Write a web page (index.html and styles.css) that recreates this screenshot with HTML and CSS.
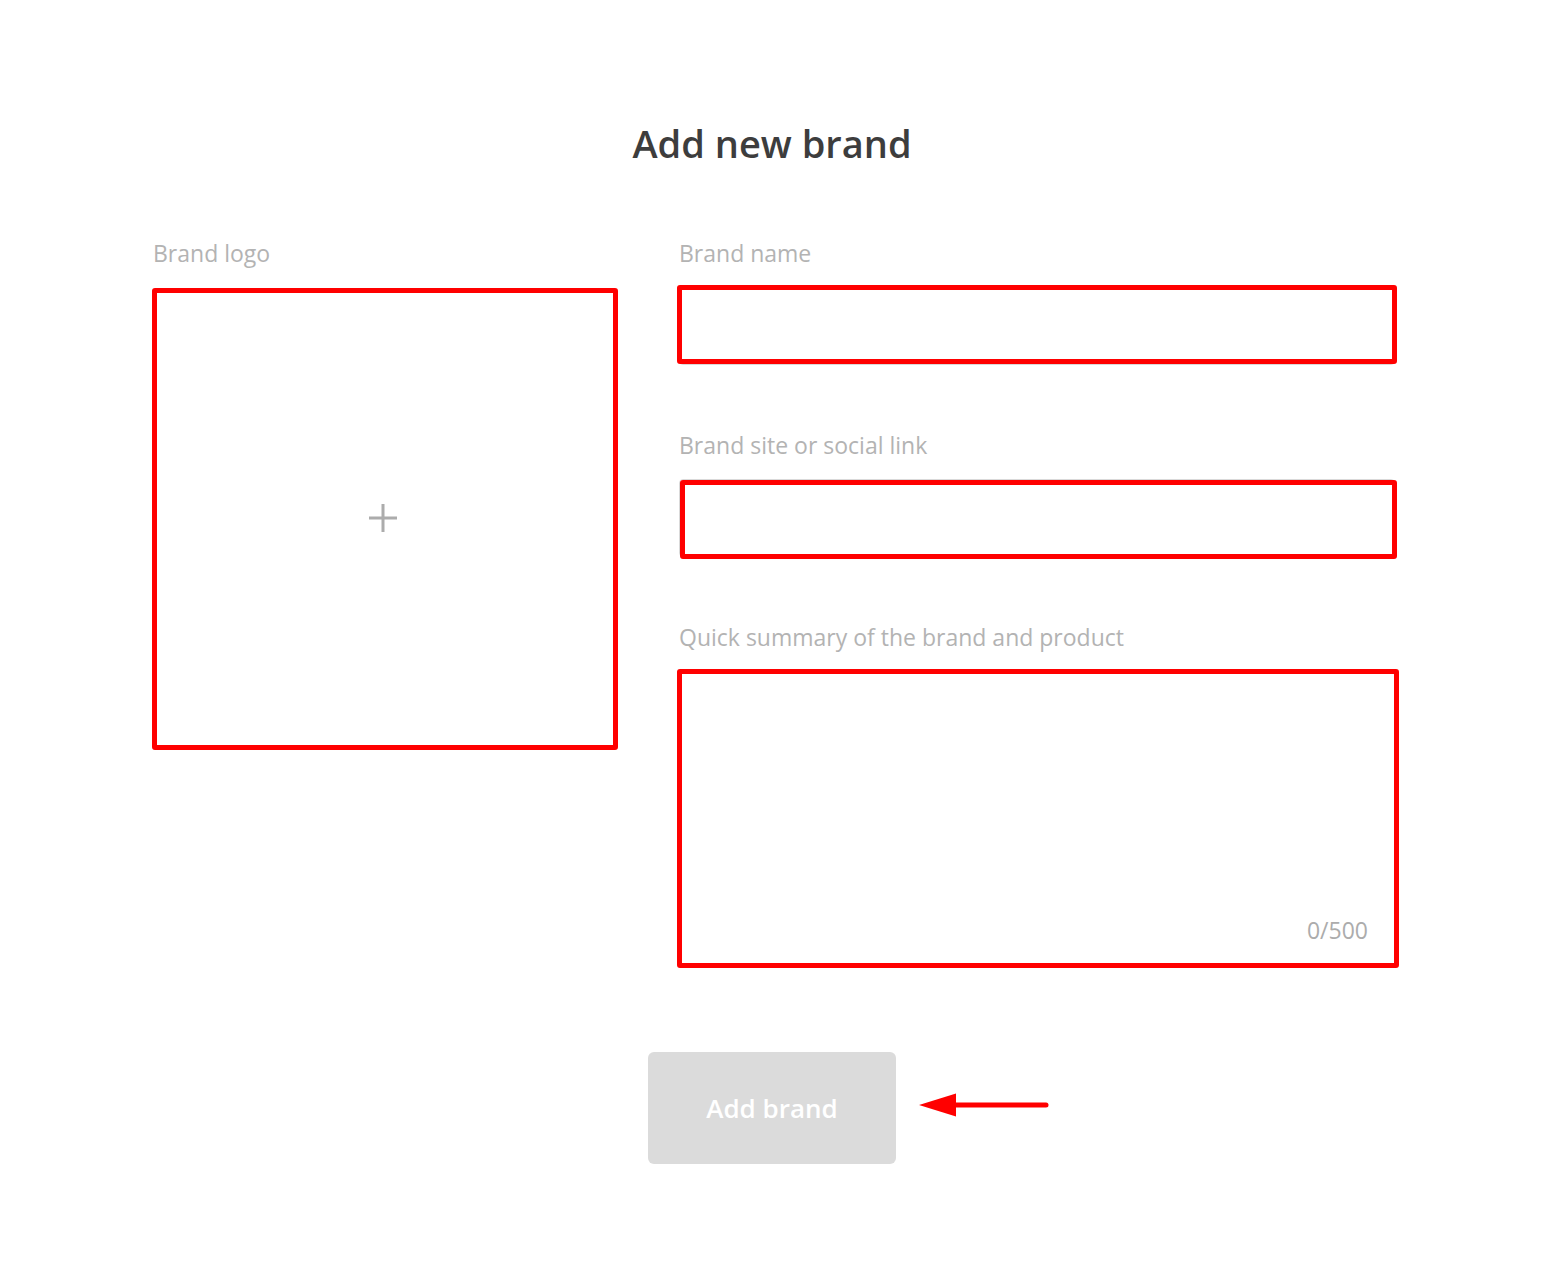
FILE: index.html
```html
<!DOCTYPE html>
<html lang="en">
<head>
    <meta charset="UTF-8">
    <meta name="viewport" content="width=device-width, initial-scale=1.0">
    <title>Add new brand</title>
    <link rel="stylesheet" href="styles.css">
</head>
<body>
<div class="page">
    <h1 class="title">Add new brand</h1>

    <div class="form">
        <div class="logo-col">
            <div class="label">Brand logo</div>
            <div class="logo-drop">
                <svg class="plus" width="30" height="30" viewBox="0 0 30 30">
                    <path d="M15 1v28M1 15h28" stroke="#acacac" stroke-width="3" fill="none"/>
                </svg>
                <span class="mark mark-logo"></span>
            </div>
        </div>

        <div class="fields">
            <div class="field">
                <label class="label" for="brandName">Brand name</label>
                <div class="input-wrap">
                    <input type="text" id="brandName" class="input">
                    <span class="mark mark-name"></span>
                </div>
            </div>

            <div class="field">
                <label class="label" for="brandLink">Brand site or social link</label>
                <div class="input-wrap">
                    <input type="text" id="brandLink" class="input">
                    <span class="mark mark-link"></span>
                </div>
            </div>

            <div class="field">
                <label class="label" for="summary">Quick summary of the brand and product</label>
                <div class="input-wrap">
                    <textarea id="summary" class="textarea"></textarea>
                    <span class="counter">0/500</span>
                    <span class="mark mark-summary"></span>
                </div>
            </div>
        </div>
    </div>

    <div class="actions">
        <div class="btn-wrap">
            <button class="submit-btn" disabled>Add brand</button>
            <svg class="arrow" width="134" height="26" viewBox="0 0 134 26">
                <path d="M36 13H128" stroke="#ff0000" stroke-width="5" stroke-linecap="round"/>
                <path d="M1 13L38 1.5V24.5Z" fill="#ff0000"/>
            </svg>
        </div>
    </div>
</div>
</body>
</html>
```

FILE: styles.css
```css
* {
    box-sizing: border-box;
    margin: 0;
    padding: 0;
}

body {
    font-family: "Open Sans", "Noto Sans", sans-serif;
    background-color: #ffffff;
    color: #3d3d3d;
}

.page {
    width: 1242px;
    margin: 0 auto;
    padding-top: 120px;
}

.title {
    font-size: 38px;
    line-height: 46px;
    font-weight: 600;
    text-align: center;
    color: #3d3d3d;
    margin-left: -4px;
}

.form {
    display: flex;
    gap: 63px;
    margin-top: 74px;
}

.logo-col {
    width: 463px;
}

.label {
    display: block;
    font-size: 23px;
    line-height: 26px;
    color: #b3b3b3;
    margin-bottom: 23px;
}

.logo-drop {
    position: relative;
    height: 458px;
    border: 2px dashed #d6d6d6;
    display: flex;
    align-items: center;
    justify-content: center;
}

.plus {
    margin-top: -1px;
    margin-left: -3px;
}

.fields {
    flex-grow: 1;
    display: flex;
    flex-direction: column;
    gap: 67px;
}

.field .label {
    margin-bottom: 21px;
}

.input-wrap {
    position: relative;
}

.input, .textarea {
    display: block;
    width: 100%;
    border: 1px solid #d9d9d9;
    border-radius: 4px;
    font-family: inherit;
    font-size: 22px;
    outline: none;
    background: #fff;
}

.input {
    height: 78px;
    padding: 0 24px;
}

.textarea {
    height: 296px;
    padding: 20px 24px;
    resize: none;
}

.counter {
    position: absolute;
    right: 27px;
    bottom: 24px;
    font-size: 23px;
    line-height: 26px;
    color: #acacac;
}

/* red annotation boxes */
.mark {
    position: absolute;
    border: 5px solid #ff0000;
    border-radius: 3px;
    pointer-events: none;
}

.mark-logo {
    top: -3px;
    left: -3px;
    right: -4px;
    bottom: -5px;
}

.mark-name {
    top: -2px;
    left: -2px;
    right: -2px;
    bottom: 1px;
}

.mark-link {
    top: 1px;
    left: 1px;
    right: -2px;
    bottom: -2px;
}

.mark-summary {
    top: -2px;
    left: -2px;
    right: -4px;
    bottom: -1px;
}

.actions {
    display: flex;
    justify-content: center;
    margin-top: 85px;
    margin-left: -4px;
}

.btn-wrap {
    position: relative;
}

.submit-btn {
    width: 248px;
    height: 112px;
    background-color: #dbdbdb;
    color: #ffffff;
    border: none;
    border-radius: 6px;
    font-family: inherit;
    font-size: 26px;
    font-weight: 600;
}

.arrow {
    position: absolute;
    left: 270px;
    top: 40px;
}
```
